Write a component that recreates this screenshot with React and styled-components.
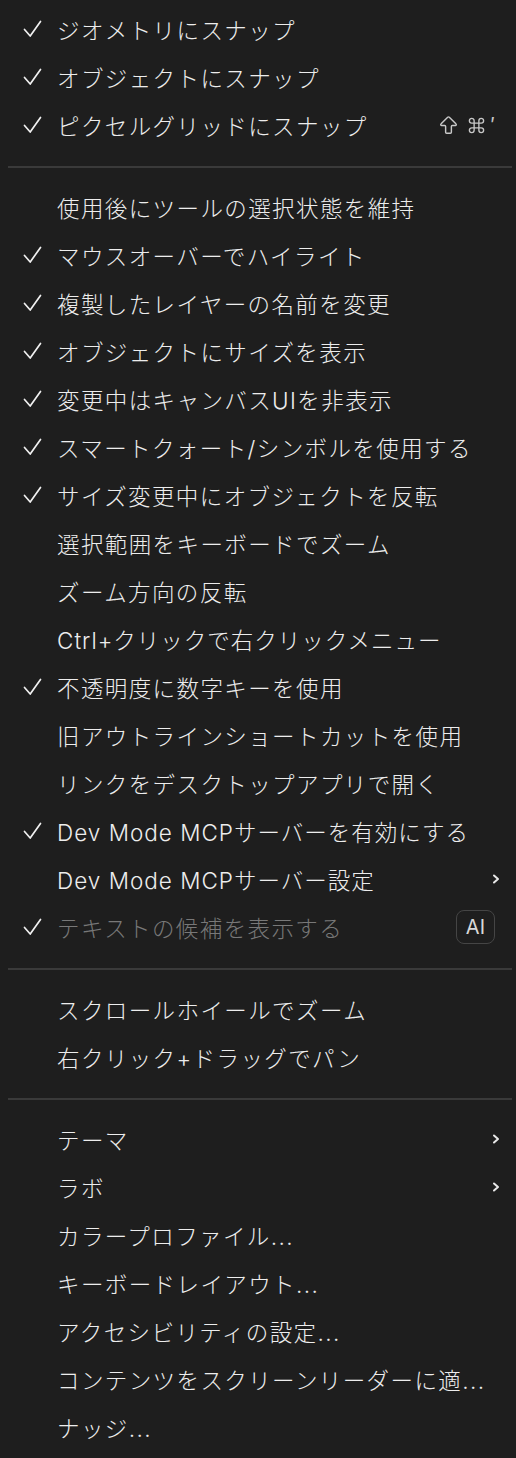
import React from 'react';
import styled, { createGlobalStyle } from 'styled-components';
import { ArrowBigUp, Command } from 'lucide-react';

const GlobalStyle = createGlobalStyle`
  html, body {
    margin: 0;
    padding: 0;
    background: #1e1e1e;
  }
  body {
    font-family: "Inter", "Noto Sans CJK JP", sans-serif;
    -webkit-font-smoothing: antialiased;
  }
`;

const groups = [
  [
    { label: 'ジオメトリにスナップ', checked: true },
    { label: 'オブジェクトにスナップ', checked: true },
    { label: 'ピクセルグリッドにスナップ', checked: true, shortcut: true },
  ],
  [
    { label: '使用後にツールの選択状態を維持' },
    { label: 'マウスオーバーでハイライト', checked: true },
    { label: '複製したレイヤーの名前を変更', checked: true },
    { label: 'オブジェクトにサイズを表示', checked: true },
    { label: '変更中はキャンバスUIを非表示', checked: true },
    { label: 'スマートクォート/シンボルを使用する', checked: true },
    { label: 'サイズ変更中にオブジェクトを反転', checked: true },
    { label: '選択範囲をキーボードでズーム' },
    { label: 'ズーム方向の反転' },
    { label: 'Ctrl+クリックで右クリックメニュー' },
    { label: '不透明度に数字キーを使用', checked: true },
    { label: '旧アウトラインショートカットを使用' },
    { label: 'リンクをデスクトップアプリで開く' },
    { label: 'Dev Mode MCPサーバーを有効にする', checked: true },
    { label: 'Dev Mode MCPサーバー設定', submenu: true },
    { label: 'テキストの候補を表示する', checked: true, disabled: true, badge: 'AI' },
  ],
  [
    { label: 'スクロールホイールでズーム' },
    { label: '右クリック+ドラッグでパン' },
  ],
  [
    { label: 'テーマ', submenu: true },
    { label: 'ラボ', submenu: true },
    { label: 'カラープロファイル...' },
    { label: 'キーボードレイアウト...' },
    { label: 'アクセシビリティの設定...' },
    { label: 'コンテンツをスクリーンリーダーに適...' },
    { label: 'ナッジ...' },
  ],
];

const Menu = styled.div`
  width: 516px;
  min-height: 1458px;
  box-sizing: border-box;
  padding: 5px 0;
  background: #1e1e1e;
  display: flex;
  flex-direction: column;
`;

const Row = styled.div`
  height: 48px;
  display: grid;
  grid-template-columns: 57px 1fr auto;
  align-items: center;
  padding-right: 16px;
  color: ${(p) => (p.$disabled ? '#787878' : '#ededed')};
`;

const CheckCell = styled.span`
  display: flex;
  justify-content: flex-start;
  padding-left: 23px;
  color: #f0f0f0;
`;

const Label = styled.span`
  font-size: 22.5px;
  font-weight: 300;
  letter-spacing: 1.4px;
  white-space: nowrap;
`;

const LatinLabel = styled(Label)`
  letter-spacing: 1px;
`;

const Right = styled.span`
  display: flex;
  align-items: center;
  color: #b8b8b8;
`;

const Shortcut = styled.span`
  display: flex;
  align-items: center;
  gap: 7px;
  color: #c8c8c8;
  margin-right: 5px;
  font-size: 20px;
`;

const Prime = styled.span`
  margin-left: -2px;
  line-height: 1;
`;

const Badge = styled.span`
  font-size: 20px;
  color: #d8d8d8;
  border: 1px solid #454545;
  border-radius: 8px;
  padding: 4px 9px;
  margin-right: 5px;
`;

const Separator = styled.hr`
  border: none;
  height: 2px;
  background: #3a3a3a;
  margin: 17px 4px 15px 8px;
`;

const Check = () => (
  <svg width="19" height="18" viewBox="0 0 19 18" fill="none">
    <path d="M1.5 9.5 L7.2 16 L17.5 1.5" stroke="currentColor" strokeWidth="1.7" strokeLinecap="round" strokeLinejoin="round" />
  </svg>
);

const Chevron = () => (
  <svg width="8" height="12" viewBox="0 0 8 12" fill="none">
    <path d="M2 2.5 L6 6 L2 9.5" stroke="#e8e8e8" strokeWidth="2" strokeLinecap="round" strokeLinejoin="round" />
  </svg>
);

const Item = ({ item }) => {
  const TextLabel = /^[A-Z]/.test(item.label) ? LatinLabel : Label;
  return (
    <Row $disabled={item.disabled}>
      <CheckCell>{item.checked && <Check />}</CheckCell>
      <TextLabel>{item.label}</TextLabel>
      <Right>
        {item.shortcut && (
          <Shortcut>
            <ArrowBigUp size={23} strokeWidth={1.5} />
            <Command size={19} strokeWidth={1.7} />
            <Prime>′</Prime>
          </Shortcut>
        )}
        {item.submenu && <Chevron />}
        {item.badge && <Badge>{item.badge}</Badge>}
      </Right>
    </Row>
  );
};

export default function App() {
  return (
    <>
      <GlobalStyle />
      <Menu>
        {groups.map((group, i) => (
          <React.Fragment key={i}>
            {i > 0 && <Separator />}
            {group.map((item) => (
              <Item key={item.label} item={item} />
            ))}
          </React.Fragment>
        ))}
      </Menu>
    </>
  );
}
